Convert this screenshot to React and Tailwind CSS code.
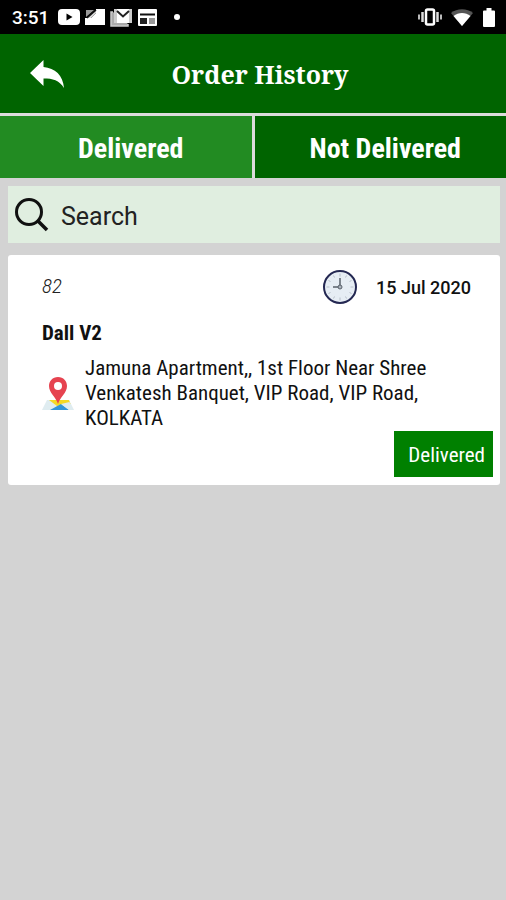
import React, { useState } from "react";

const StatusIcons = () => (
  <div className="flex items-center gap-[5px] text-white">
    <svg width="22" height="16" viewBox="0 0 22 16" aria-hidden="true">
      <rect x="0" y="0" width="22" height="16" rx="4" fill="currentColor" />
      <path d="M8.500 4.500 14.500 8l-6 3.500z" fill="#000" />
    </svg>
    <svg width="20" height="16" viewBox="0 0 20 16" aria-hidden="true">
      <path d="M11 0h9v16H0V9h6l5-5z" fill="currentColor" />
      <path d="M1 1h8L1 8z" fill="#999" />
      <path d="M2 9 11 1" stroke="#111" strokeWidth="1.500" />
      <path d="M3 9h3l5-5V2z" fill="#ddd" />
    </svg>
    <svg width="23" height="19" viewBox="0 0 23 19" aria-hidden="true">
      <path d="M3 4H1v14h17v-2" fill="#aaa" stroke="#ccc" strokeWidth="1.500" />
      <rect x="4" y="1" width="18" height="14" rx="1" fill="#fff" />
      <path d="M4 1h3v14H4zM19 1h3v14h-3z" fill="#ccc" />
      <path d="m7 3 6 5.500L19 3" fill="none" stroke="#222" strokeWidth="2" />
    </svg>
    <svg width="19" height="17" viewBox="0 0 19 17" aria-hidden="true">
      <rect x="0" y="0" width="19" height="17" rx="1" fill="currentColor" />
      <path d="M2 5.500h15" stroke="#111" strokeWidth="2" />
      <rect x="2" y="9" width="7" height="6" fill="#222" />
      <rect x="11" y="9" width="6" height="6" fill="#999" />
    </svg>
    <span className="ml-3 h-[6px] w-[6px] rounded-full bg-white"></span>
  </div>
);

const SystemIcons = () => (
  <div className="flex items-center text-white">
    <svg width="24" height="18" viewBox="0 0 24 18" aria-hidden="true">
      <rect x="8" y="1.500" width="8" height="15" rx="1.500" fill="none" stroke="currentColor" strokeWidth="2.500" />
      <path d="M4.500 4v10M19.500 4v10" stroke="#ddd" strokeWidth="2.500" />
      <path d="M1 6.500v5M23 6.500v5" stroke="#bbb" strokeWidth="2" />
    </svg>
    <svg className="ml-[9px]" width="22" height="17" viewBox="0 0 22 17" aria-hidden="true">
      <path d="M0 4C6-1 16-1 22 4L11 17z" fill="#555" />
      <path d="M2.500 7c5-4 12-4 17 0L11 17z" fill="currentColor" />
    </svg>
    <svg className="ml-[10px]" width="12" height="19" viewBox="0 0 12 19" aria-hidden="true">
      <path d="M3.500 0h5v2.500H11a1 1 0 0 1 1 1V18a1 1 0 0 1-1 1H1a1 1 0 0 1-1-1V3.500a1 1 0 0 1 1-1h2.500z" fill="currentColor" />
    </svg>
  </div>
);

const ClockIcon = () => (
  <svg width="36" height="36" viewBox="0 0 36 36" aria-hidden="true">
    <circle cx="18" cy="18" r="16" fill="#e6edf4" stroke="#242852" strokeWidth="2" />
    <path d="M18 4.500v3M18 28.500v3M4.500 18h3M28.500 18h3M11.500 6.500l1 2M24.500 6.500l-1 2M11.500 29.500l1-2M24.500 29.500l-1-2M6.500 11.500l2 1M29.500 11.500l-2 1M6.500 24.500l2-1M29.500 24.500l-2-1" stroke="#b8c0ca" strokeWidth="1" />
    <path d="M18 9v9h-7" fill="none" stroke="#59616b" strokeWidth="1.500" />
    <circle cx="18" cy="18" r="2" fill="#aab2bb" stroke="#59616b" strokeWidth="1" />
  </svg>
);

const PinIcon = () => (
  <svg width="32" height="34" viewBox="0 0 32 34" aria-hidden="true">
    <path d="M5 23h22l5 10H0z" fill="#dfecf0" />
    <path d="M7 23h20l1.500 4L15 29z" fill="#f5d925" />
    <path d="m8 33 11-6 8 6z" fill="#3396d8" />
    <path d="m19 27 8.500-2 3.500 8h-4z" fill="#dfecf0" />
    <path d="M16 0C10.500 0 7 4 7 9c0 7 7 11 9 18 2-7 9-11 9-18 0-5-3.500-9-9-9z" fill="#e64350" />
    <circle cx="16" cy="9" r="4" fill="#fff" />
  </svg>
);

const orders = [
  {
    id: 82,
    date: "15 Jul 2020",
    name: "Dall V2",
    address: "Jamuna Apartment,, 1st Floor Near Shree Venkatesh Banquet, VIP Road, VIP Road, KOLKATA",
    status: "Delivered",
  },
];

const OrderCard = ({ order }) => (
  <article className="rounded-[3px] bg-white pt-[14px] pr-[7px] pb-2 pl-[34px]">
    <div className="flex items-center pr-[22px]">
      <p className="flex-1 text-[21px] font-light italic text-[#222]">{order.id}</p>
      <ClockIcon />
      <p className="ml-[18px] font-['Roboto'] text-[18px] font-medium text-[#111]">{order.date}</p>
    </div>
    <h2 className="mt-[14px] text-[21px] leading-7 font-bold text-[#111]">{order.name}</h2>
    <div className="mt-[9px] flex items-center gap-[11px] pr-14">
      <span className="shrink-0"><PinIcon /></span>
      <p className="text-[21px] leading-[25px] text-[#111]">{order.address}</p>
    </div>
    <div className="flex justify-end">
      <span className="bg-[#008000] pt-[9px] pr-2 pb-[7px] pl-[14px] text-[21px] leading-[30px] text-white">{order.status}</span>
    </div>
  </article>
);

const tabs = ["Delivered", "Not Delivered"];

const App = () => {
  const [activeTab, setActiveTab] = useState("Delivered");
  const [search, setSearch] = useState("");

  const visibleOrders = orders.filter(
    (order) => order.status === activeTab && order.name.toLowerCase().includes(search.toLowerCase())
  );

  return (
    <div className="min-h-screen bg-[#d3d3d3] font-['Roboto_Condensed','Roboto',sans-serif]">
      <div className="flex h-[34px] items-center justify-between bg-black pr-[11px] pl-3">
        <div className="flex items-center gap-[9px]">
          <span className="pt-[2px] font-['Roboto'] text-[19px] font-medium text-white">3:51</span>
          <StatusIcons />
        </div>
        <SystemIcons />
      </div>

      <header className="grid h-[79px] grid-cols-[1fr_auto_1fr] items-center bg-[#006400] px-[30px]">
        <button type="button" aria-label="Back" className="w-[34px]">
          <svg width="34" height="28" viewBox="0 0 34 28" aria-hidden="true">
            <path d="M0 13 13.500 0v7C25 8 33 15 34 28c-5-8-11-9.500-20.500-9.500V26z" fill="#fff" />
          </svg>
        </button>
        <h1 className="pt-[2px] pl-[14px] font-['Noto_Serif','Liberation_Serif',serif] text-[25px] font-bold text-white">Order History</h1>
      </header>

      <nav className="grid grid-cols-2 gap-[3px] border-y-[3px] border-t-[#dcdcdc] border-b-[#d3d3d3] bg-[#dcdcdc]">
        {tabs.map((tab) => (
          <button
            key={tab}
            type="button"
            onClick={() => setActiveTab(tab)}
            className={`h-[62px] pt-1 pl-[10px] text-[28px] font-bold text-white ${activeTab === tab ? "bg-[#228b22]" : "bg-[#006400]"}`}
          >
            {tab}
          </button>
        ))}
      </nav>

      <main className="flex flex-col gap-3 px-2 pt-[5px] pr-[6px]">
        <label className="flex h-[57px] items-center gap-3 bg-[#e0eee0] pl-[7px]">
          <svg className="shrink-0" width="34" height="36" viewBox="0 0 34 36" aria-hidden="true">
            <circle cx="14" cy="15" r="12.500" fill="none" stroke="#111" strokeWidth="3" />
            <path d="m23 24 9 9" stroke="#111" strokeWidth="3.500" />
          </svg>
          <input
            type="text"
            aria-label="Search"
            value={search}
            onChange={(e) => setSearch(e.target.value)}
            placeholder="Search"
            className="min-w-0 flex-1 bg-transparent pt-1 font-['Roboto'] text-[25px] text-[#222] placeholder-[#222] outline-none"
          />
        </label>
        {visibleOrders.map((order) => (
          <OrderCard key={order.id} order={order} />
        ))}
      </main>
    </div>
  );
};

export default App;
